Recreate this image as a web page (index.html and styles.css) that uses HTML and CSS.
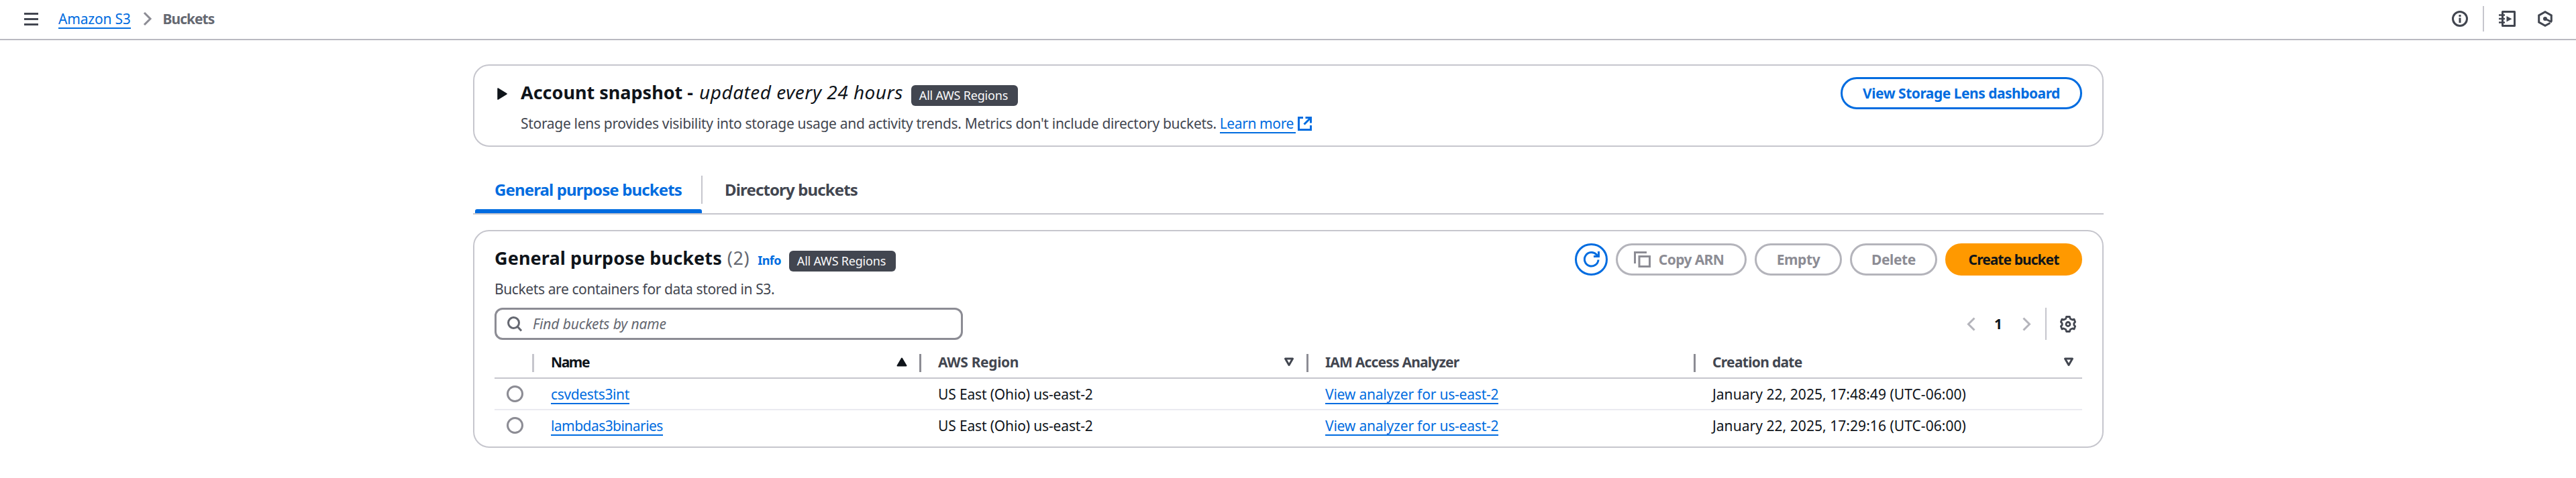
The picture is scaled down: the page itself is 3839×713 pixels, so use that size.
FILE: index.html
```html
<!DOCTYPE html>
<html lang="en">
<head>
<meta charset="utf-8">
<title>S3 buckets</title>
<link rel="stylesheet" href="styles.css">
</head>
<body>
<header class="topbar">
  <svg class="menu" width="21" height="19" viewBox="0 0 21 19"><path d="M0 1.500h21M0 9.500h21M0 17.500h21" stroke="#424650" stroke-width="3"/></svg>
  <nav class="crumbs">
    <a class="link t-s3" href="#">Amazon S3</a>
    <svg class="crumb-sep" width="14" height="22" viewBox="0 0 14 22"><path d="M2 2l9 9-9 9" fill="none" stroke="#8c8c94" stroke-width="3"/></svg>
    <span class="current t-buckets">Buckets</span>
  </nav>
  <div class="tools">
    <svg width="24" height="24" viewBox="0 0 24 24"><circle cx="12" cy="12" r="10.500" fill="none" stroke="#424650" stroke-width="3"/><path d="M12 6v3M12 10.500v7.500" stroke="#424650" stroke-width="3"/></svg>
    <span class="tools-divider"></span>
    <svg class="notebook" width="25" height="24" viewBox="0 0 25 24"><path d="M5.500 1.500h18v21h-18z" fill="none" stroke="#424650" stroke-width="3" stroke-linejoin="round"/><path d="M0 6.500h9M0 12h9M0 17.500h9" stroke="#424650" stroke-width="2.600"/><path d="M11.500 8v8.500l8-4.200z" fill="#424650"/></svg>
    <svg class="hex" width="22" height="24" viewBox="0 0 22 24"><path d="M18.500 18.200L11 22.300l-9.300-5.200V6.900L11 1.700l9.300 5.200v9.100" fill="none" stroke="#424650" stroke-width="3"/><circle cx="11" cy="12" r="3" fill="#424650"/><path d="M11 12l10 5" stroke="#424650" stroke-width="3"/></svg>
  </div>
</header>
<main class="content">
  <section class="card snapshot">
    <svg class="caret" width="15" height="18" viewBox="0 0 15 18"><path d="M1 1l13 8-13 8z" fill="#0f141a" stroke="#0f141a" stroke-width="1.500" stroke-linejoin="round"/></svg>
    <div class="snapshot-text">
      <div class="title-row">
        <h2 class="title"><span class="t-acc">Account snapshot -</span> <em class="t-upd">updated every 24 hours</em></h2>
        <span class="badge"><span class="t-badge">All AWS Regions</span></span>
      </div>
      <p class="desc"><span class="t-desc1">Storage lens provides visibility into storage usage and activity trends. Metrics don't include directory buckets.</span><a class="link learn" href="#"><span class="t-learn">Learn more</span></a><svg class="external" width="21" height="21" viewBox="0 0 21 21"><path d="M8 1.500H1.500v18h18V13" fill="none" stroke="#006ce0" stroke-width="3"/><path d="M11.500 1.500h8v8M19 2L9.500 11.500" fill="none" stroke="#006ce0" stroke-width="3"/></svg></p>
    </div>
    <button class="btn primary-outline lens"><span class="t-lens">View Storage Lens dashboard</span></button>
  </section>
  <div class="tabs">
    <a class="tab active" href="#"><span class="t-tab">General purpose buckets</span></a>
    <a class="tab" href="#"><span class="t-tab">Directory buckets</span></a>
  </div>
  <section class="card buckets">
    <div class="head">
      <div class="head-text">
        <div class="title-row">
          <h2 class="title"><span class="t-gpb">General purpose buckets</span></h2>
          <span class="count">(2)</span>
          <a class="info" href="#">Info</a>
          <span class="badge"><span class="t-badge">All AWS Regions</span></span>
        </div>
        <p class="desc"><span class="t-desc2">Buckets are containers for data stored in S3.</span></p>
      </div>
      <div class="actions">
        <button class="btn primary-outline refresh"><svg width="24" height="24" viewBox="0 0 24 24"><path d="M22 12.500A10.300 10.300 0 1 1 19.500 5L22 7.500" fill="none" stroke="#006ce0" stroke-width="3"/><path d="M22.500 0v7.500H15" fill="none" stroke="#006ce0" stroke-width="3"/></svg></button>
        <button class="btn disabled copy"><svg width="25" height="24" viewBox="0 0 25 24"><path d="M1.500 18V1.500H19" fill="none" stroke="#8c8c94" stroke-width="3"/><path d="M8 7.500h15.500v15H8z" fill="none" stroke="#8c8c94" stroke-width="3"/></svg><span class="t-copy">Copy ARN</span></button>
        <button class="btn disabled narrow"><span class="t-narrow">Empty</span></button>
        <button class="btn disabled narrow"><span class="t-narrow">Delete</span></button>
        <button class="btn create"><span class="t-create">Create bucket</span></button>
      </div>
    </div>
    <div class="filter-row">
      <div class="search">
        <svg width="22" height="23" viewBox="0 0 22 23"><circle cx="9.500" cy="9.500" r="8" fill="none" stroke="#656871" stroke-width="3"/><path d="M15 15l6 6.500" stroke="#656871" stroke-width="3"/></svg>
        <span class="placeholder t-find">Find buckets by name</span>
      </div>
      <div class="pager">
        <svg width="13" height="21" viewBox="0 0 13 21"><path d="M11.500 1.500l-9 9 9 9" fill="none" stroke="#b4b4bb" stroke-width="3"/></svg>
        <span class="page">1</span>
        <svg width="13" height="21" viewBox="0 0 13 21"><path d="M1.500 1.500l9 9-9 9" fill="none" stroke="#b4b4bb" stroke-width="3"/></svg>
        <span class="pager-divider"></span>
        <svg class="gear" width="24" height="25" viewBox="0 0 24 25"><path d="M9.500 1.500h5l.8 3 3.200 1.600 2.500-1 1.600 4.200-1.800 2v2.400l1.800 2-1.600 4.200-2.500-1-3.200 1.600-.8 3h-5l-.8-3-3.200-1.600-2.500 1-1.600-4.200 1.800-2v-2.400l-1.800-2L3 5.100l2.500 1 3.200-1.600z" fill="none" stroke="#424650" stroke-width="2.800" stroke-linejoin="round"/><circle cx="12" cy="12.500" r="3" fill="none" stroke="#424650" stroke-width="2.800"/></svg>
      </div>
    </div>
    <div class="table">
      <div class="row header">
        <div class="cell pick"></div>
        <div class="cell sorted"><span class="t-name">Name</span><svg width="16" height="14" viewBox="0 0 16 14"><path d="M8 1.500l6.500 11h-13z" fill="#0f141a" stroke="#0f141a" stroke-width="2" stroke-linejoin="round"/></svg></div>
        <div class="cell"><span class="t-region">AWS Region</span><svg width="16" height="14" viewBox="0 0 16 14"><path d="M2.500 2h11L8 11.500z" fill="none" stroke="#424650" stroke-width="3" stroke-linejoin="round"/></svg></div>
        <div class="cell"><span class="t-iam">IAM Access Analyzer</span></div>
        <div class="cell"><span class="t-creation">Creation date</span><svg width="16" height="14" viewBox="0 0 16 14"><path d="M2.500 2h11L8 11.500z" fill="none" stroke="#424650" stroke-width="3" stroke-linejoin="round"/></svg></div>
      </div>
      <div class="row">
        <div class="cell pick"><span class="radio"></span></div>
        <div class="cell"><a class="link t-csv" href="#">csvdests3int</a></div>
        <div class="cell"><span class="t-us">US East (Ohio) us-east-2</span></div>
        <div class="cell"><a class="link t-view" href="#">View analyzer for us-east-2</a></div>
        <div class="cell"><span class="t-date">January 22, 2025, 17:48:49 (UTC-06:00)</span></div>
      </div>
      <div class="row last">
        <div class="cell pick"><span class="radio"></span></div>
        <div class="cell"><a class="link t-lambda" href="#">lambdas3binaries</a></div>
        <div class="cell"><span class="t-us">US East (Ohio) us-east-2</span></div>
        <div class="cell"><a class="link t-view" href="#">View analyzer for us-east-2</a></div>
        <div class="cell"><span class="t-date">January 22, 2025, 17:29:16 (UTC-06:00)</span></div>
      </div>
    </div>
  </section>
</main>
</body>
</html>
```
FILE: styles.css
```css
* { box-sizing: border-box; }
body { margin: 0; background: #fff; color: #0f141a; font: 21px/30px "Noto Sans", "Open Sans", sans-serif; white-space: nowrap; }
h2, p { margin: 0; font-weight: inherit; }
svg { display: block; flex: none; }
.link { display: inline-block; color: #006ce0; text-decoration: none; height: 30px; border-bottom: 2px solid #006ce0; }

.topbar { display: flex; align-items: center; height: 60px; padding: 0 35px 2px 36px; border-bottom: 2px solid #b9b9c1; }
.crumbs { display: flex; align-items: center; margin-left: 30px; }
.crumb-sep { margin: 0 16px 0 18px; }
.current { font-weight: 700; color: #656871; }
.tools { display: flex; align-items: center; margin-left: auto; }
.tools-divider { width: 2px; height: 38px; margin: 0 22px; background: #c6c6cd; }
.hex { margin-left: 33px; }

.content { width: 2430px; margin: 36px 0 0 705px; }
.card { border: 2px solid #c6c6cd; border-radius: 24px; }
.snapshot { display: flex; height: 123px; padding: 17px 30px 0 34px; }
.caret { margin: 16px 20px 0 0; }
.snapshot-text { padding-top: 5px; }
.title-row { display: flex; align-items: baseline; height: 42px; line-height: 36px; }
.title { font-size: 27px; font-weight: 700; }
.title em { font-weight: 400; font-size: 28px; line-height: 30px; margin-left: 2px; }
.badge { align-self: flex-start; width: 159px; height: 31px; margin: 7px 0 0 12px; padding: 0 12px; border-radius: 6px; background: #424650; color: #f9f9fa; font-size: 18px; line-height: 30px; }
.desc { display: flex; margin-top: 7px; color: #424650; }
.learn { width: 113px; margin-left: 5px; }
.external { margin: 5px 0 0 3px; }
.btn { display: flex; align-items: center; justify-content: center; height: 48px; margin: 0; padding: 0; border: 3px solid; border-radius: 30px; background: #fff; font: 700 21px/30px "Noto Sans", "Open Sans", sans-serif; }
.primary-outline { border-color: #006ce0; color: #006ce0; }
.lens { width: 360px; margin-left: auto; }

.tabs { display: flex; height: 58px; margin-top: 43px; border-bottom: 2px solid #c6c6cd; }
.tab { position: relative; padding: 4px 30px 0 33px; color: #424650; font-size: 24px; font-weight: 700; line-height: 34px; text-decoration: none; }
.tab.active { width: 342px; padding-left: 32px; color: #006ce0; }
.tab.active::before { content: ""; position: absolute; right: 0; top: 0; width: 2px; height: 42px; background: #c6c6cd; }
.tab.active::after { content: ""; position: absolute; left: 3px; right: 1px; bottom: 0; height: 6px; border-radius: 3px 3px 0 0; background: #006ce0; }

.buckets { height: 325px; margin-top: 23px; padding: 18px 30px 0 30px; }
.head { display: flex; justify-content: space-between; height: 96px; }
.head-text { padding-top: 4px; }
.count { margin-left: 8px; color: #656871; font-size: 27px; letter-spacing: .6px; }
.info { margin-left: 12px; color: #006ce0; font-size: 18px; font-weight: 700; letter-spacing: -.6px; text-decoration: none; }
.actions { display: flex; gap: 12px; }
.refresh { width: 49px; }
.copy { width: 195px; gap: 12px; padding-right: 7px; }
.narrow { width: 130px; }
.disabled { border-color: #b4b4bb; color: #8c8c94; }
.create { width: 204px; border-color: #f90; background: #f90; color: #0f141a; }
.filter-row { display: flex; justify-content: space-between; height: 48px; }
.search { display: flex; align-items: center; width: 698px; padding-left: 16px; border: 3px solid #8c8c94; border-radius: 12px; }
.placeholder { margin-left: 16px; color: #656871; font-style: italic; }
.pager { display: flex; align-items: center; }
.page { width: 12px; margin: 0 30px 0 28px; font-weight: 700; }
.pager-divider { width: 2px; height: 48px; margin: 0 20px 0 21px; background: #c6c6cd; }
.gear { margin-right: 9px; }

.table { margin-top: 10px; }
.row { display: grid; grid-template-columns: 58px 577px 577px 577px 1fr; height: 47px; border-bottom: 2px solid #ebebf0; }
.row.last { border-bottom: 0; height: 45px; }
.row.header { height: 48px; border-color: #c6c6cd; color: #424650; font-weight: 700; }
.cell { position: relative; display: flex; align-items: center; padding-left: 26px; }
.header .cell { justify-content: space-between; padding-right: 20px; }
.header .cell:last-child { padding-right: 12px; }
.header .cell:not(:last-child)::after { content: ""; position: absolute; right: -1px; top: 11px; width: 3px; height: 27px; background: #8c8c94; }
.header .cell.pick::after { background: #c6c6cd; }
.row .sorted { color: #0f141a; }
.row .pick { padding-left: 18px; }
.radio { width: 25px; height: 25px; border: 3px solid #8c8c94; border-radius: 50%; }

/* tracking */
.t-s3 { letter-spacing: -.2px; }
.t-buckets { letter-spacing: -1px; }
.t-upd { letter-spacing: .5px; }
.t-badge { letter-spacing: -.2px; }
.t-desc1 { letter-spacing: -.31px; }
.t-learn { letter-spacing: -.4px; }
.t-lens { letter-spacing: -.5px; }
.t-tab { letter-spacing: -.86px; }
.t-gpb { letter-spacing: .12px; }
.t-desc2 { letter-spacing: -.4px; }
.t-find { letter-spacing: -.1px; }
.t-copy { letter-spacing: -.6px; }
.t-narrow { letter-spacing: -.4px; }
.t-create { letter-spacing: -.95px; }
.t-name { letter-spacing: -1.4px; }
.t-region { letter-spacing: -.35px; }
.t-iam { letter-spacing: -.8px; }
.t-creation { letter-spacing: -.7px; }
.t-csv { letter-spacing: -.36px; }
.t-lambda { letter-spacing: -.55px; }
.t-us { letter-spacing: -.15px; }
.t-view { letter-spacing: -.2px; }
.t-date { letter-spacing: .05px; }
```
